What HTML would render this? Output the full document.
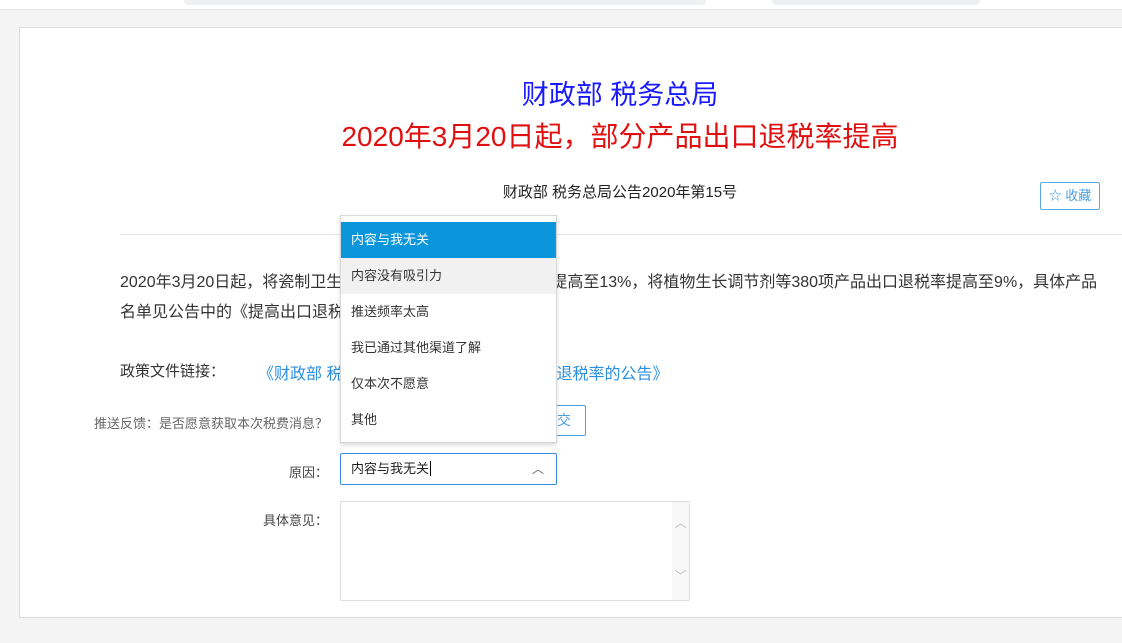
<!DOCTYPE html>
<html><head><meta charset="utf-8"><style>
*{margin:0;padding:0;box-sizing:border-box}
body{width:1122px;height:643px;overflow:hidden;background:#f4f4f4;font-family:"Liberation Sans","Noto Sans CJK SC",sans-serif;position:relative}
.top{position:absolute;left:0;top:0;width:1122px;height:10px;background:#fff;border-bottom:1px solid #e6e6e6}
.top i{position:absolute;top:0;height:5px;background:#eef0f2;border-radius:0 0 4px 4px}
.card{position:absolute;left:19px;top:27px;width:1110px;height:591px;background:#fff;border:1px solid #dcdcdc}
.a{position:absolute;white-space:nowrap}
.c{display:inline-block;width:1em;text-align:left}
.hr{position:absolute;left:120px;top:234px;width:1002px;height:1px;background:#e8e8e8}
.dd{position:absolute;left:340px;top:215px;width:217px;height:228px;background:#fff;border:1px solid #d8d8d8;box-shadow:0 2px 4px rgba(0,0,0,.15);padding-top:6px}
.dd div{height:36px;line-height:36px;padding-left:10px;font-size:13px;color:#333}
</style></head><body>
<div class="top"><i style="left:184px;width:522px"></i><i style="left:772px;width:208px"></i></div>
<div class="card"></div>
<div class="a" style="left:0;width:1240px;text-align:center;top:73px;font-size:27px;color:#1a1aff">财政部 税务总局</div>
<div class="a" style="left:0;width:1240px;text-align:center;top:115px;font-size:28px;color:#e01010">2020年3月20日起<span class="c">，</span>部分产品出口退税率提高</div>
<div class="a" style="left:0;width:1240px;text-align:center;top:181px;font-size:15px;color:#222">财政部 税务总局公告2020年第15号</div>
<div class="a" style="left:1040px;top:182px;width:60px;height:28px;border:1px solid #5aa9e6;border-radius:2px;color:#4a9fe0;font-size:13px;line-height:26px;text-align:center">☆ 收藏</div>
<div class="hr"></div>
<div class="a" style="left:120px;top:268px;font-size:16px;color:#333;line-height:30px">2020年3月20日起<span class="c">，</span>将瓷制卫生<span style="margin-left:209px">提高至13%<span class="c">，</span>将植物生长调节剂等380项产品出口退税率提高至9%<span class="c">，</span>具体产品</span><br>名单见公告中的《提高出口退税</div>
<div class="a" style="left:120px;top:360px;font-size:15px;color:#333">政策文件链接<span class="c">：</span></div>
<div class="a" style="left:258px;top:360px;font-size:16px;color:#2b8fe0">《财政部 税<span style="margin-left:214px">退税率的公告》</span></div>
<div class="a" style="left:0;width:328px;text-align:right;top:413px;font-size:13px;color:#666">推送反馈<span class="c">：</span>是否愿意获取本次税费消息<span class="c">？</span></div>
<div class="a" style="left:520px;top:405px;width:66px;height:31px;border:1px solid #4a9fe0;border-radius:2px;color:#4a9fe0;font-size:14px;line-height:29px;padding-left:36px">交</div>
<div class="a" style="left:0;width:328px;text-align:right;top:462px;font-size:13px;color:#444">原因<span class="c">：</span></div>
<div class="a" style="left:340px;top:453px;width:217px;height:32px;border:1px solid #3a8ee6;border-radius:2px;font-size:13px;line-height:30px;padding-left:10px;color:#222">内容与我无关<span style="border-left:1px solid #000;margin-left:1px"></span><span style="position:absolute;right:12px;top:0;color:#666;font-size:12px">︿</span></div>
<div class="a" style="left:0;width:328px;text-align:right;top:510px;font-size:13px;color:#444">具体意见<span class="c">：</span></div>
<div class="a" style="left:340px;top:501px;width:350px;height:100px;border:1px solid #ddd;border-radius:2px"><div style="position:absolute;right:0;top:0;width:17px;height:98px;background:#f8f8f8;color:#bbb;font-size:12px;text-align:center"><div style="margin-top:12px">︿</div><div style="margin-top:36px">﹀</div></div></div>
<div class="dd">
<div style="background:#0b96dc;color:#fff">内容与我无关</div>
<div style="background:#f1f1f1">内容没有吸引力</div>
<div>推送频率太高</div>
<div>我已通过其他渠道了解</div>
<div>仅本次不愿意</div>
<div>其他</div>
</div>
</body></html>
